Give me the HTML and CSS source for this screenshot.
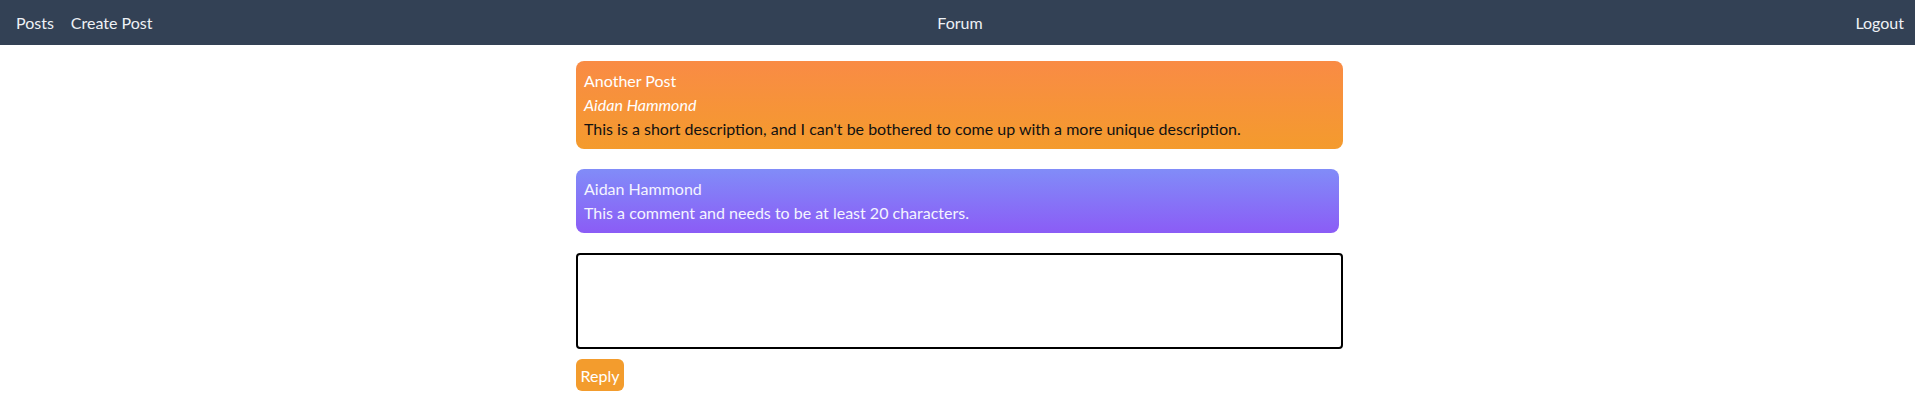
FILE: index.html
```html
<!DOCTYPE html>
<html>
<head>
<meta charset="utf-8">
<link rel="stylesheet" href="styles.css">
</head>
<body>
<nav class="nav">
  <div class="nav-left">
    <a class="nav-link">Posts</a>
    <a class="nav-link">Create Post</a>
  </div>
  <div class="nav-title">Forum</div>
  <div class="nav-right">
    <a class="nav-link">Logout</a>
  </div>
</nav>
<main class="main">
  <div class="content">
    <section class="post">
      <div class="post-title">Another Post</div>
      <div class="post-author">Aidan Hammond</div>
      <div class="post-desc">This is a short description, and I can't be bothered to come up with a more unique description.</div>
    </section>
    <section class="comment">
      <div>Aidan Hammond</div>
      <div>This a comment and needs to be at least 20 characters.</div>
    </section>
    <textarea class="reply-box"></textarea>
    <div><button class="reply-btn">Reply</button></div>
  </div>
</main>
</body>
</html>
```
FILE: styles.css
```css
html, body {
  margin: 0;
  padding: 0;
  background: #ffffff;
  font-family: Lato, "Noto Sans", sans-serif;
  font-size: 16px;
  line-height: 24px;
}
.nav {
  height: 45px;
  background: #334155;
  color: #eef1f5;
  display: grid;
  grid-template-columns: 1fr auto 1fr;
  align-items: center;
  padding: 0 11px 0 16px;
}
.nav-left {
  display: flex;
  gap: 17px;
}
.nav-right {
  display: flex;
  justify-content: flex-end;
}
.nav-title {
  text-align: center;
}
.nav-link {
  color: #eef1f5;
  cursor: pointer;
}
.main {
  display: flex;
  justify-content: center;
  padding-top: 16px;
}
.content {
  width: 767px;
  padding-left: 4px;
  display: flex;
  flex-direction: column;
}
.post {
  border-radius: 8px;
  padding: 8px;
  background: linear-gradient(to bottom, #f98b45, #f49b2d);
  color: #ffffff;
}
.post-author {
  font-style: italic;
}
.post-desc {
  color: #111111;
}
.comment {
  margin-top: 20px;
  margin-right: 4px;
  border-radius: 8px;
  padding: 8px;
  background: linear-gradient(to bottom, #818cf8, #8b5cf6);
  color: #f4f4ff;
}
.reply-box {
  margin-top: 20px;
  box-sizing: border-box;
  width: 767px;
  height: 96px;
  border: 2px solid #000000;
  border-radius: 4px;
  resize: none;
  font-family: inherit;
  font-size: 16px;
  padding: 4px;
}
.reply-btn {
  margin-top: 10px;
  height: 32px;
  width: 48px;
  padding: 0;
  border: none;
  border-radius: 6px;
  background: #f39c2d;
  color: #ffffff;
  font-family: inherit;
  font-size: 16px;
  cursor: pointer;
}
```
